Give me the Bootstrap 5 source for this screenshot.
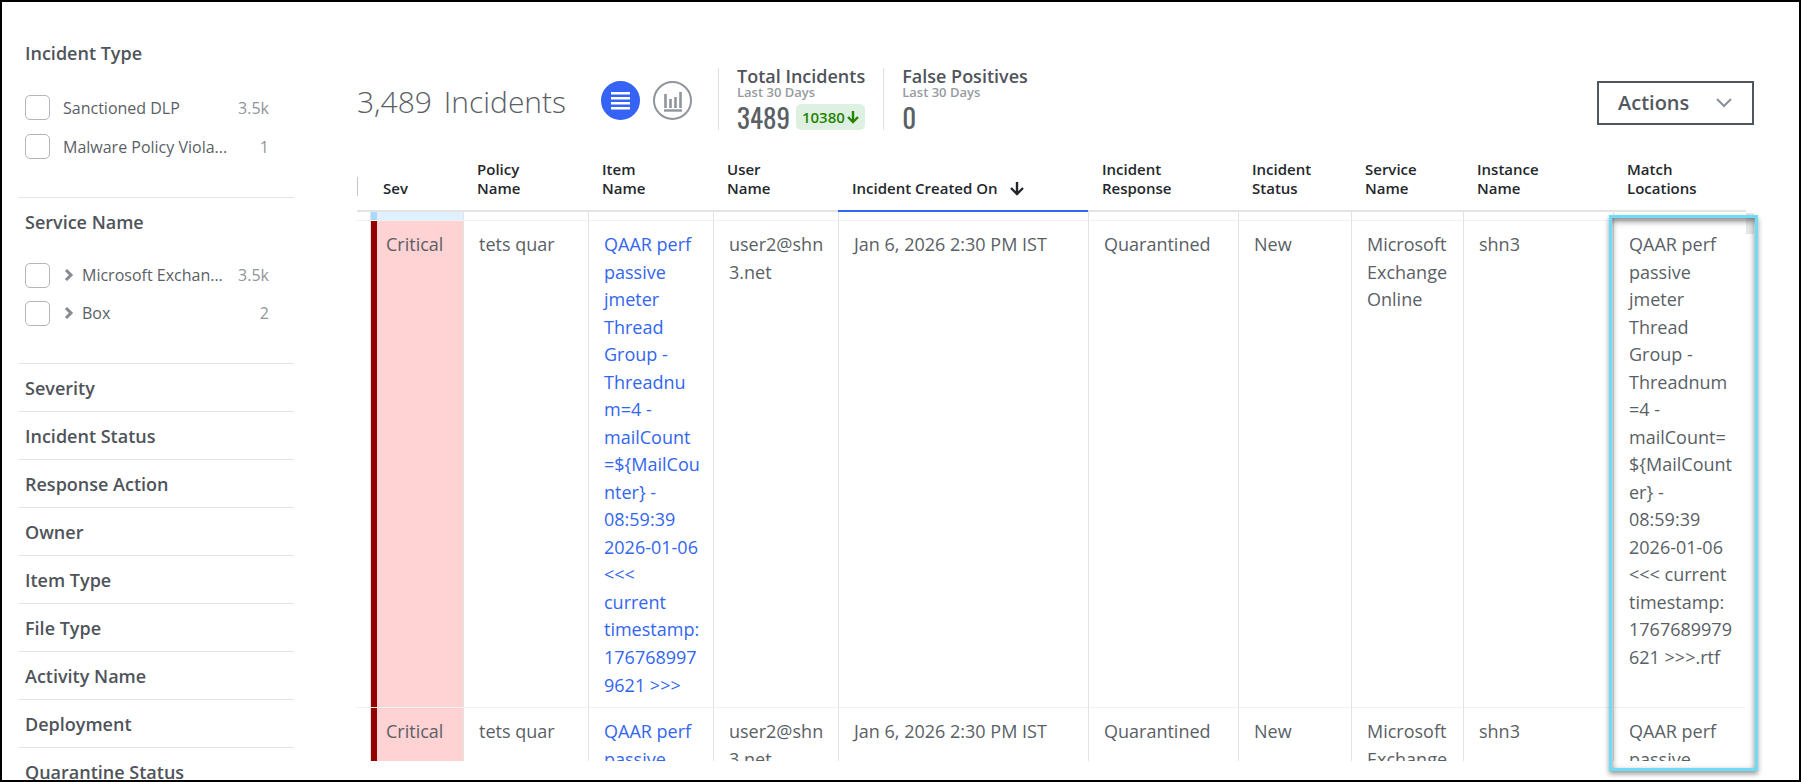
<!DOCTYPE html>
<html lang="en">
<head>
<meta charset="utf-8">
<meta name="viewport" content="width=device-width, initial-scale=1">
<title>Policy Incidents</title>
<link href="https://cdn.jsdelivr.net/npm/bootstrap@5.3.0/dist/css/bootstrap.min.css" rel="stylesheet">
<style>
  body { font-family: "Open Sans", "Noto Sans", sans-serif; color: #5a5f66; background: #fff; }
  a { color: #3366f0; text-decoration: none; }
  .app-frame { height: 100vh; border: 2px solid #000; }

  /* Filter sidebar */
  .facets { width: 275px; margin-left: 17px; padding-top: 27px; }
  .facet { border-bottom: 1px solid #e3e4e5; padding: 12px 6px 11px; }
  .facet:last-child { border-bottom: 0; }
  .facet-title { font-size: 18px; line-height: 24px; font-weight: 560; color: #4f545b; margin: 0; }
  .facet-open { padding-bottom: 31px; }
  .facet-list { margin: 23px 0 0; }
  .facet-list li { height: 39px; padding-right: 19px; font-size: 16px; }
  .facet-tree { margin-top: 22px; }
  .facet-tree li { height: 38px; }
  .facet-list .form-check-input { width: 25px; height: 25px; margin: 0; border: 1px solid #b2b5b9; border-radius: 5px; }
  .facet-list label { margin-left: 13px; }
  .facet-tree label { margin-left: 8px; }
  .expander { margin-left: 14px; }
  .tally { color: #90959b; }

  /* Page header */
  .page-main { padding: 66px 45px 19px 63px; }
  .page-head { height: 62px; }
  .page-title { font-size: 30px; font-weight: 300; line-height: 36px; width: 244px; padding-top: 2px; color: #5a5f66; }
  .view-switch { height: 65px; gap: 0 13px; margin-right: 26px; }
  .page-title { margin-right: -13px; }
  .view-btn { width: 39px; height: 39px; border: 2px solid #8f959b; color: #8f959b; background: #fff; }
  .view-btn.active { background: #3563f6; border-color: #3563f6; color: #fff; }
  .stat { border-left: 1px solid #e0e1e3; padding: 0 18px; }
  .stat-name { font-size: 18px; line-height: 17px; font-weight: 560; color: #4f545b; }
  .stat-span { font-size: 13px; line-height: 15px; font-weight: 560; color: #969ba0; }
  .stat-num { font-family: "Oswald", "Liberation Sans Narrow", "Roboto", sans-serif; font-size: 27px; line-height: 34px; }
  .stat-row { gap: 6px; }
  .trend { height: 26px; padding: 0 6px; border-radius: 5px; background: #def0e1; color: #258404; font-size: 15px; font-weight: 560; gap: 2px; }
  .actions-btn { width: 157px; height: 44px; border: 2px solid #50565d; background: #fff; color: #53585f; font-size: 20px; font-weight: 600; padding: 0 20px 0 19px; margin-bottom: 5px; }

  /* Incident grid */
  .grid-zone { min-height: 0; }
  .incidents { width: 100%; table-layout: fixed; border-collapse: separate; border-spacing: 0; }
  .incidents th { height: 82px; vertical-align: bottom; padding: 0 0 12px 14px; border-bottom: 2px solid #e3e3e3; font-size: 15px; line-height: 19px; font-weight: 580; color: #23272c; }
  .incidents th.sorted { border-bottom-color: #3366f5; }
  .incidents th:first-child { padding: 0 0 14px; }
  .incidents th.sev-head { padding-left: 13px; }
  .tick { width: 1px; height: 19px; background: #c4c6c8; }
  .incidents td { vertical-align: top; padding: 10px 0 8px 15px; border-left: 1px solid #e2e3e4; border-bottom: 1px solid #f0f0f0; font-size: 18px; line-height: 1.53; white-space: nowrap; }
  .incidents td:first-child { border-left: 0; }
  .incidents td.sev { background: #ffd2d3 linear-gradient(#930000, #930000) no-repeat left / 6px 100%; }
  .incidents .peek td { height: 9px; padding: 0; }
  .incidents .peek td.sev { background: #dff0ff linear-gradient(#a9d9ff, #a9d9ff) no-repeat left / 6px 100%; }
  .scroll-rail { width: 8px; padding-top: 83px; }
  .scroll-thumb { height: 21px; background: #e6e7e8; }
  .spotlight { top: 85px; right: -4px; bottom: -10px; width: 149px; border: 3px solid #6fdcf6; box-shadow: 0 3px 5px rgba(0,0,0,.4), inset 0 3px 6px rgba(0,0,0,.5); pointer-events: none; }
</style>
</head>
<body>
<div class="app-frame d-flex overflow-hidden">

  <aside class="facets flex-shrink-0">
    <section class="facet facet-open">
      <h2 class="facet-title">Incident Type</h2>
      <ul class="facet-list list-unstyled">
        <li class="d-flex align-items-center"><input class="form-check-input" type="checkbox" id="f-dlp"><label for="f-dlp">Sanctioned DLP</label><span class="tally ms-auto">3.5k</span></li>
        <li class="d-flex align-items-center"><input class="form-check-input" type="checkbox" id="f-mal"><label for="f-mal">Malware Policy Viola...</label><span class="tally ms-auto">1</span></li>
      </ul>
    </section>
    <section class="facet facet-open">
      <h2 class="facet-title">Service Name</h2>
      <ul class="facet-list facet-tree list-unstyled">
        <li class="d-flex align-items-center"><input class="form-check-input" type="checkbox" id="f-exc"><svg class="expander" width="10" height="14" viewBox="0 0 10 14" fill="none" stroke="#858b91" stroke-width="3"><path d="M2 2l5 5-5 5"/></svg><label for="f-exc">Microsoft Exchan...</label><span class="tally ms-auto">3.5k</span></li>
        <li class="d-flex align-items-center"><input class="form-check-input" type="checkbox" id="f-box"><svg class="expander" width="10" height="14" viewBox="0 0 10 14" fill="none" stroke="#858b91" stroke-width="3"><path d="M2 2l5 5-5 5"/></svg><label for="f-box">Box</label><span class="tally ms-auto">2</span></li>
      </ul>
    </section>
    <section class="facet"><h2 class="facet-title">Severity</h2></section>
    <section class="facet"><h2 class="facet-title">Incident Status</h2></section>
    <section class="facet"><h2 class="facet-title">Response Action</h2></section>
    <section class="facet"><h2 class="facet-title">Owner</h2></section>
    <section class="facet"><h2 class="facet-title">Item Type</h2></section>
    <section class="facet"><h2 class="facet-title">File Type</h2></section>
    <section class="facet"><h2 class="facet-title">Activity Name</h2></section>
    <section class="facet"><h2 class="facet-title">Deployment</h2></section>
    <section class="facet"><h2 class="facet-title">Quarantine Status</h2></section>
  </aside>

  <main class="page-main d-flex flex-column flex-grow-1">
    <header class="page-head d-flex flex-shrink-0">
      <div class="view-switch d-flex align-items-center">
        <h1 class="page-title mb-0 text-nowrap">3,489 <span class="ms-1">Incidents</span></h1>
        <button type="button" class="view-btn active rounded-circle p-0 d-flex align-items-center justify-content-center" aria-label="List view">
          <svg width="19" height="19" viewBox="0 0 19 19" stroke="currentColor" stroke-width="2.6"><path d="M0 2.3h19M0 7.3h19M0 12.3h19M0 17.3h19"/></svg>
        </button>
        <button type="button" class="view-btn rounded-circle p-0 d-flex align-items-center justify-content-center" aria-label="Chart view">
          <svg width="20" height="22" viewBox="0 0 20 22" stroke="currentColor" fill="none"><path d="M2.5 4v14M7.5 9v9M12.5 7v11M17.5 2v16" stroke-width="2.6"/><path d="M1 20.5h18" stroke-width="2.4"/></svg>
        </button>
      </div>
      <div class="stat">
        <div class="stat-name">Total Incidents</div>
        <div class="stat-span">Last 30 Days</div>
        <div class="stat-row d-flex align-items-center">
          <span class="stat-num">3489</span>
          <span class="trend d-inline-flex align-items-center">10380<svg width="12" height="14" viewBox="0 0 12 14" fill="none" stroke="currentColor" stroke-width="2.4"><path d="M6 1v11M1 7l5 5 5-5"/></svg></span>
        </div>
      </div>
      <div class="stat">
        <div class="stat-name">False Positives</div>
        <div class="stat-span">Last 30 Days</div>
        <div class="stat-num">0</div>
      </div>
      <button type="button" class="actions-btn ms-auto mt-auto d-flex align-items-center justify-content-between">Actions
        <svg width="16" height="10" viewBox="0 0 16 10" fill="none" stroke="#8b9096" stroke-width="2"><path d="M1 1l7 7 7-7"/></svg>
      </button>
    </header>

    <div class="grid-zone position-relative d-flex flex-grow-1">
      <div class="flex-grow-1 overflow-hidden">
        <table class="incidents">
          <colgroup>
            <col style="width:13px"><col style="width:93px"><col style="width:125px"><col style="width:125px"><col style="width:125px"><col style="width:250px"><col style="width:150px"><col style="width:113px"><col style="width:112px"><col style="width:150px"><col style="width:133px">
          </colgroup>
          <thead>
            <tr>
              <th><div class="tick"></div></th>
              <th class="sev-head">Sev</th>
              <th>Policy<br>Name</th>
              <th>Item<br>Name</th>
              <th>User<br>Name</th>
              <th class="sorted" aria-sort="descending">Incident Created On <svg class="ms-2" width="16" height="16" viewBox="0 0 16 16" fill="none" stroke="currentColor" stroke-width="2.4"><path d="M8 0v12M2 6l6 6 6-6"/></svg></th>
              <th>Incident<br>Response</th>
              <th>Incident<br>Status</th>
              <th>Service<br>Name</th>
              <th>Instance<br>Name</th>
              <th>Match<br>Locations</th>
            </tr>
          </thead>
          <tbody>
            <tr class="peek"><td></td><td class="sev"></td><td></td><td></td><td></td><td></td><td></td><td></td><td></td><td></td><td></td></tr>
            <tr>
              <td></td>
              <td class="sev">Critical</td>
              <td>tets quar</td>
              <td><a href="#">QAAR perf<br>passive<br>jmeter<br>Thread<br>Group -<br>Threadnu<br>m=4 -<br>mailCount<br>=${MailCou<br>nter} -<br>08:59:39<br>2026-01-06<br>&lt;&lt;&lt;<br>current<br>timestamp:<br>176768997<br>9621 &gt;&gt;&gt;</a></td>
              <td>user2@shn<br>3.net</td>
              <td>Jan 6, 2026 2:30 PM IST</td>
              <td>Quarantined</td>
              <td>New</td>
              <td>Microsoft<br>Exchange<br>Online</td>
              <td>shn3</td>
              <td>QAAR perf<br>passive<br>jmeter<br>Thread<br>Group -<br>Threadnum<br>=4 -<br>mailCount=<br>${MailCount<br>er} -<br>08:59:39<br>2026-01-06<br>&lt;&lt;&lt; current<br>timestamp:<br>1767689979<br>621 &gt;&gt;&gt;.rtf</td>
            </tr>
            <tr>
              <td></td>
              <td class="sev">Critical</td>
              <td>tets quar</td>
              <td><a href="#">QAAR perf<br>passive</a></td>
              <td>user2@shn<br>3.net</td>
              <td>Jan 6, 2026 2:30 PM IST</td>
              <td>Quarantined</td>
              <td>New</td>
              <td>Microsoft<br>Exchange</td>
              <td>shn3</td>
              <td>QAAR perf<br>passive</td>
            </tr>
          </tbody>
        </table>
      </div>
      <div class="scroll-rail flex-shrink-0"><div class="scroll-thumb"></div></div>
      <div class="spotlight position-absolute"></div>
    </div>
  </main>
</div>
<script src="https://cdn.jsdelivr.net/npm/bootstrap@5.3.0/dist/js/bootstrap.bundle.min.js"></script>
</body>
</html>
